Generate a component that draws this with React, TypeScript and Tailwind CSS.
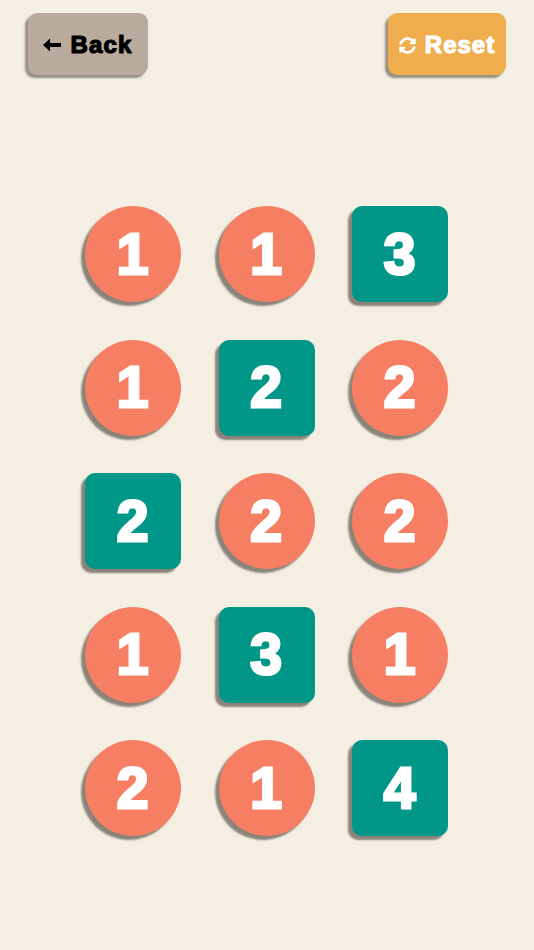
import { FaSyncAlt } from "react-icons/fa";

type Cell = { n: number; shape: "circle" | "square" };

const cells: Cell[] = [
  { n: 1, shape: "circle" },
  { n: 1, shape: "circle" },
  { n: 3, shape: "square" },
  { n: 1, shape: "circle" },
  { n: 2, shape: "square" },
  { n: 2, shape: "circle" },
  { n: 2, shape: "square" },
  { n: 2, shape: "circle" },
  { n: 2, shape: "circle" },
  { n: 1, shape: "circle" },
  { n: 3, shape: "square" },
  { n: 1, shape: "circle" },
  { n: 2, shape: "circle" },
  { n: 1, shape: "circle" },
  { n: 4, shape: "square" },
];

function BackArrow() {
  return (
    <svg viewBox="0 0 18 14" className="h-[14px] w-[18px]" aria-hidden="true">
      <path d="M0 7 L7 0.5 L7 5 L18 5 L18 9 L7 9 L7 13.5 Z" fill="currentColor" />
    </svg>
  );
}

export default function App() {
  return (
    <div className="min-h-screen w-full bg-[#f5efe3] font-['Liberation_Sans',Arial,sans-serif]">
      <div className="flex items-center justify-between px-[28px] pt-[13px]">
        <button
          type="button"
          className="flex h-[62px] w-[120px] items-center justify-center gap-[9px] rounded-[9px] bg-[#b9ac9e] pt-[2px] text-[24px] font-bold tracking-[1.2px] text-black shadow-[-3px_3px_2px_rgba(90,80,70,0.6)] [-webkit-text-stroke:1.2px_black]"
        >
          <BackArrow />
          <span>Back</span>
        </button>
        <button
          type="button"
          className="flex h-[62px] w-[118px] items-center justify-center gap-[9px] rounded-[9px] bg-[#f0ad4e] pt-[2px] text-[24px] font-bold tracking-[1px] text-white shadow-[-3px_3px_2px_rgba(90,80,70,0.6)] [-webkit-text-stroke:1.2px_white]"
        >
          <FaSyncAlt className="h-[17px] w-[17px]" />
          <span>Reset</span>
        </button>
      </div>

      <div className="ml-[85px] mt-[131px] grid w-[363px] grid-cols-3 gap-x-[37.5px] gap-y-[37.5px]">
        {cells.map((cell, i) => (
          <div
            key={i}
            className={`flex h-[96px] w-[96px] items-center justify-center text-[57px] font-bold leading-none tracking-[1px] text-white shadow-[-4px_4px_2px_rgba(100,95,85,0.75)] [-webkit-text-stroke:3px_white] ${
              cell.shape === "circle" ? "rounded-full bg-[#f67e62]" : "rounded-[10px] bg-[#009688]"
            }`}
          >
            {cell.n}
          </div>
        ))}
      </div>
    </div>
  );
}
